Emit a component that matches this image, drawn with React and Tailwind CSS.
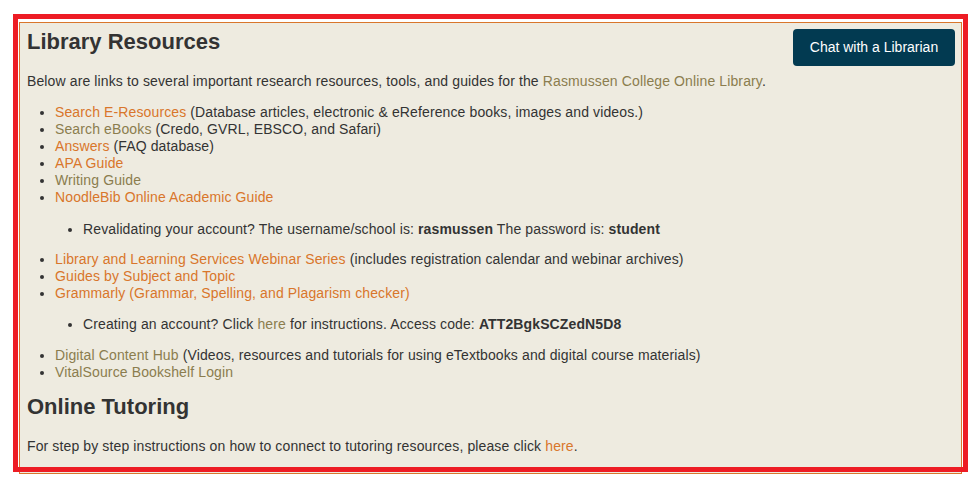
export default function App() {
  const orange = "text-[#d9762b]";
  const olive = "text-[#8b7d4e]";

  return (
    <div className="relative min-h-[483px] bg-white pl-[19px] pt-[22px] font-['Liberation_Sans',Arial,sans-serif] text-[14px] leading-[17px] tracking-[0.12px] text-[#333]">
      {/* Content panel */}
      <div className="h-[452px] w-[943px] border border-[#d9762b] bg-[#eeebe0] py-[6px] pl-[7px] pr-[6px]">
        <button className="float-right h-[37px] w-[162px] rounded-[4px] bg-[#023a51] text-[14px] tracking-normal text-white">
          Chat with a Librarian
        </button>

        <h2 className="text-[22px] font-bold leading-[26px] tracking-normal text-[#333]">Library Resources</h2>

        <p className="mt-[18px]">
          Below are links to several important research resources, tools, and guides for the{" "}
          <a className={olive}>Rasmussen College Online Library</a>.
        </p>

        <ul className="mt-[14px] list-disc pl-[28px]">
          <li>
            <a className={orange}>Search E-Resources</a> (Database articles, electronic &amp; eReference books, images and videos.)
          </li>
          <li>
            <a className={olive}>Search eBooks</a> (Credo, GVRL, EBSCO, and Safari)
          </li>
          <li>
            <a className={orange}>Answers</a> (FAQ database)
          </li>
          <li>
            <a className={orange}>APA Guide</a>
          </li>
          <li>
            <a className={olive}>Writing Guide</a>
          </li>
          <li>
            <a className={orange}>NoodleBib Online Academic Guide</a>
            <ul className="mb-[13px] mt-[15px] list-disc pl-[28px]">
              <li>
                Revalidating your account? The username/school is: <b>rasmussen</b> The password is: <b>student</b>
              </li>
            </ul>
          </li>
          <li>
            <a className={orange}>Library and Learning Services Webinar Series</a> (includes registration calendar and webinar archives)
          </li>
          <li>
            <a className={orange}>Guides by Subject and Topic</a>
          </li>
          <li>
            <a className={orange}>Grammarly (Grammar, Spelling, and Plagarism checker)</a>
            <ul className="my-[14px] list-disc pl-[28px]">
              <li>
                Creating an account? Click <a className={olive}>here</a> for instructions. Access code: <b>ATT2BgkSCZedN5D8</b>
              </li>
            </ul>
          </li>
          <li>
            <a className={olive}>Digital Content Hub</a> (Videos, resources and tutorials for using eTextbooks and digital course materials)
          </li>
          <li>
            <a className={olive}>VitalSource Bookshelf Login</a>
          </li>
        </ul>

        <h2 className="mt-[13px] text-[22px] font-bold leading-[26px] tracking-normal text-[#333]">Online Tutoring</h2>

        <p className="mt-[18px]">
          For step by step instructions on how to connect to tutoring resources, please click{" "}
          <a className={orange}>here</a>.
        </p>
      </div>

      {/* Red annotation frame drawn over the screenshot */}
      <div className="pointer-events-none absolute left-[13px] top-[14px] h-[458px] w-[955px] border-[5px] border-[#ed1c24]" />
    </div>
  );
}
